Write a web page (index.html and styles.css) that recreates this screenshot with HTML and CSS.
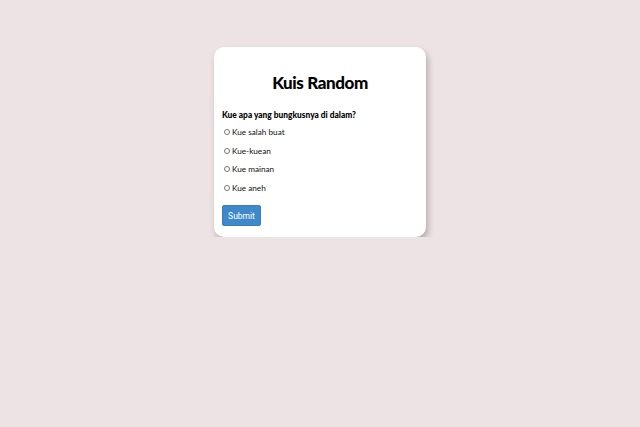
FILE: index.html
```html
<!DOCTYPE html>
<html>
<head>
<meta charset="utf-8">
<link rel="stylesheet" href="styles.css">
</head>
<body>
<div class="card">
  <h1 class="title">Kuis Random</h1>
  <p class="question">Kue apa yang bungkusnya di dalam?</p>
  <ul class="options">
    <li><label><input type="radio" name="q"> Kue salah buat</label></li>
    <li><label><input type="radio" name="q"> Kue-kuean</label></li>
    <li><label><input type="radio" name="q"> Kue mainan</label></li>
    <li><label><input type="radio" name="q"> Kue aneh</label></li>
  </ul>
  <button class="submit">Submit</button>
</div>
</body>
</html>
```
FILE: styles.css
```css
html, body {
  margin: 0;
  padding: 0;
  background: #ede3e4;
  font-family: "Lato", "Open Sans", sans-serif;
}
body {
  display: flex;
  justify-content: center;
  padding-top: 47px;
}
.card {
  width: 212px;
  height: 190px;
  box-sizing: border-box;
  background: #fff;
  border-radius: 10px;
  box-shadow: 2px 4px 6px rgba(0,0,0,0.25);
  padding: 0 8px;
}
.title {
  margin: 24px 0 0;
  font-size: 17px;
  font-weight: 900;
  text-align: center;
  line-height: 24px;
  letter-spacing: -0.4px;
  color: #000;
}
.question {
  margin: 14px 0 0;
  font-size: 8.4px;
  font-weight: 900;
  line-height: 12px;
  color: #000;
}
.options {
  list-style: none;
  margin: 2px 0 0;
  padding: 0;
}
.options li {
  height: 18.5px;
  display: flex;
  align-items: center;
  font-size: 8.2px;
  color: #111;
}
.options label {
  display: flex;
  align-items: center;
}
.options input {
  width: 6px;
  height: 6px;
  margin: 0 2px 0 2px;
}
.submit {
  margin-top: 8px;
  width: 39px;
  height: 21px;
  padding: 0;
  border: 1px solid #3a7fbd;
  border-radius: 2px;
  background: #3f88c9;
  color: #fff;
  font-family: "Liberation Sans Narrow", "Roboto", sans-serif;
  font-size: 8.5px;
}
```
